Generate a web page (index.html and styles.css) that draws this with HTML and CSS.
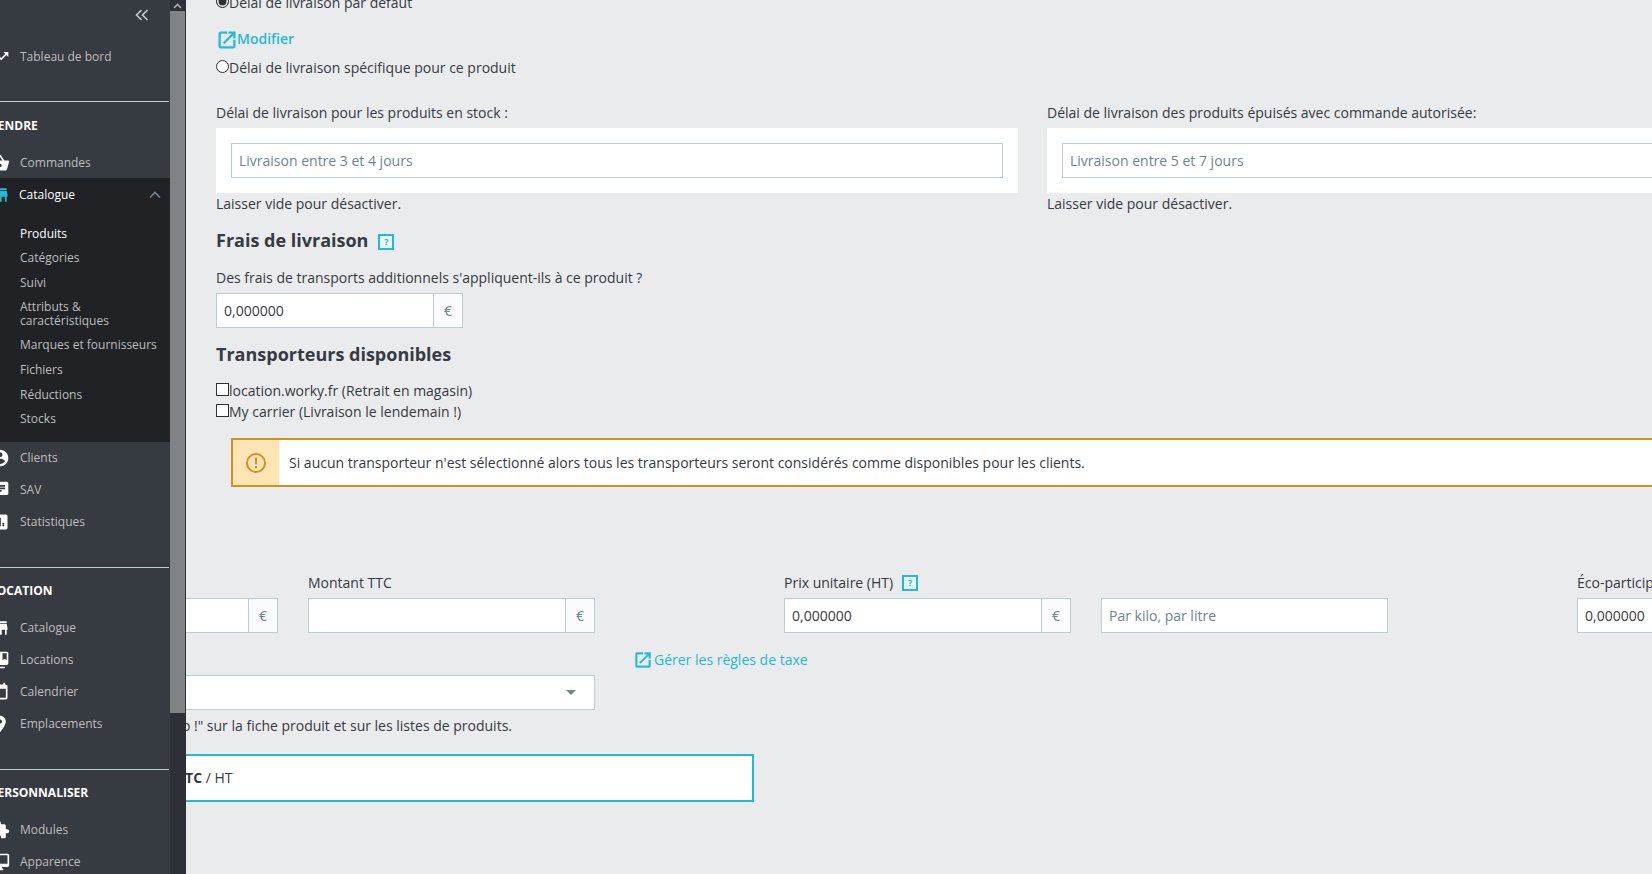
FILE: index.html
```html
<!DOCTYPE html>
<html lang="fr">
<head>
<meta charset="utf-8">
<title>Produit</title>
<link rel="stylesheet" href="styles.css">
</head>
<body>
<div class="app">
  <nav class="sidebar">
    <div class="collapse"><svg width="14" height="12" viewBox="0 0 14 12"><path d="M6.5 1 1.5 6l5 5M12.5 1l-5 5 5 5" class="collapse-arrow"/></svg></div>
    <a class="item"><svg class="ico" viewBox="0 0 24 24"><path d="M16 6l2.29 2.29-4.88 4.88-4-4L2 16.59 3.41 18l6-6 4 4 6.3-6.29L22 12V6z"/></svg>Tableau de bord</a>
    <section class="group first">
      <div class="head">Vendre</div>
      <a class="item"><svg class="ico" viewBox="0 0 24 24"><path d="M17.21 9l-4.38-6.56c-.19-.28-.51-.42-.83-.42-.32 0-.64.14-.83.43L6.79 9H2c-.55 0-1 .45-1 1 0 .09.01.18.04.27l2.54 9.27c.23.84 1 1.46 1.92 1.46h13c.92 0 1.69-.62 1.93-1.46l2.54-9.27L23 10c0-.55-.45-1-1-1h-4.79zM9 9l3-4.4L15 9H9zm3 8c-1.1 0-2-.9-2-2s.9-2 2-2 2 .9 2 2-.9 2-2 2z"/></svg>Commandes</a>
      <div class="open">
        <a class="item active"><svg class="ico" viewBox="0 0 24 24"><path d="M20 4H4v2h16V4zm1 10v-2l-1-5H4l-1 5v2h1v6h10v-6h4v6h2v-6h1zm-9 4H6v-4h6v4z"/></svg>Catalogue<svg class="chev" width="12" height="8" viewBox="0 0 12 8"><path d="M1 6.5 6 1.5l5 5"/></svg></a>
        <ul class="sub">
          <li class="current">Produits</li>
          <li>Catégories</li>
          <li>Suivi</li>
          <li class="wrap">Attributs &amp; caractéristiques</li>
          <li>Marques et fournisseurs</li>
          <li>Fichiers</li>
          <li>Réductions</li>
          <li>Stocks</li>
        </ul>
      </div>
      <a class="item"><svg class="ico" viewBox="0 0 24 24"><path d="M12 2C6.48 2 2 6.48 2 12s4.48 10 10 10 10-4.48 10-10S17.52 2 12 2zm0 3c1.66 0 3 1.34 3 3s-1.34 3-3 3-3-1.34-3-3 1.34-3 3-3zm0 14.2c-2.5 0-4.71-1.28-6-3.22.03-1.99 4-3.08 6-3.08 1.99 0 5.97 1.09 6 3.08-1.29 1.94-3.5 3.22-6 3.22z"/></svg>Clients</a>
      <a class="item"><svg class="ico" viewBox="0 0 24 24"><path d="M20 2H4c-1.1 0-1.99.9-1.99 2L2 22l4-4h14c1.1 0 2-.9 2-2V4c0-1.1-.9-2-2-2zM6 9h12v2H6V9zm8 5H6v-2h8v2zm4-6H6V6h12v2z"/></svg>SAV</a>
      <a class="item"><svg class="ico" viewBox="0 0 24 24"><path d="M19 3H5c-1.1 0-2 .9-2 2v14c0 1.1.9 2 2 2h14c1.1 0 2-.9 2-2V5c0-1.1-.9-2-2-2zM9 17H7v-7h2v7zm4 0h-2V7h2v10zm4 0h-2v-4h2v4z"/></svg>Statistiques</a>
    </section>
    <section class="group">
      <div class="head">Location</div>
      <a class="item"><svg class="ico" viewBox="0 0 24 24"><path d="M20 4H4v2h16V4zm1 10v-2l-1-5H4l-1 5v2h1v6h10v-6h4v6h2v-6h1zm-9 4H6v-4h6v4z"/></svg>Catalogue</a>
      <a class="item"><svg class="ico" viewBox="0 0 24 24"><path d="M4 6H2v14c0 1.1.9 2 2 2h14v-2H4V6zm16-4H8c-1.1 0-2 .9-2 2v12c0 1.1.9 2 2 2h12c1.1 0 2-.9 2-2V4c0-1.1-.9-2-2-2zm0 10l-2.5-1.5L15 12V4h5v8z"/></svg>Locations</a>
      <a class="item"><svg class="ico" viewBox="0 0 24 24"><path d="M19 3h-1V1h-2v2H8V1H6v2H5c-1.11 0-1.99.9-1.99 2L3 19c0 1.1.89 2 2 2h14c1.1 0 2-.9 2-2V5c0-1.1-.9-2-2-2zm0 16H5V8h14v11z"/></svg>Calendrier</a>
      <a class="item"><svg class="ico" viewBox="0 0 24 24"><path d="M12 2C8.13 2 5 5.13 5 9c0 5.25 7 13 7 13s7-7.75 7-13c0-3.87-3.13-7-7-7zm0 9.5c-1.38 0-2.5-1.12-2.5-2.5s1.12-2.5 2.5-2.5 2.5 1.12 2.5 2.5-1.12 2.5-2.5 2.5z"/></svg>Emplacements</a>
    </section>
    <section class="group">
      <div class="head">Personnaliser</div>
      <a class="item"><svg class="ico" viewBox="0 0 24 24"><path d="M20.5 11H19V7c0-1.1-.9-2-2-2h-4V3.5C13 2.12 11.88 1 10.5 1S8 2.12 8 3.5V5H4c-1.1 0-1.99.9-1.99 2v3.8H3.5c1.49 0 2.7 1.21 2.7 2.7s-1.21 2.7-2.7 2.7H2V20c0 1.1.9 2 2 2h3.8v-1.5c0-1.49 1.21-2.7 2.7-2.7 1.49 0 2.7 1.21 2.7 2.7V22H17c1.1 0 2-.9 2-2v-4h1.5c1.38 0 2.5-1.12 2.5-2.5S21.88 11 20.5 11z"/></svg>Modules</a>
      <a class="item"><svg class="ico" viewBox="0 0 24 24"><path d="M21 2H3c-1.1 0-2 .9-2 2v12c0 1.1.9 2 2 2h7l-2 3v1h8v-1l-2-3h7c1.1 0 2-.9 2-2V4c0-1.1-.9-2-2-2zm0 12H3V4h18v10z"/></svg>Apparence</a>
    </section>
  </nav>
  <div class="scrollbar">
    <div class="sb-up"><svg width="9" height="6" viewBox="0 0 9 6"><path d="M1 5 4.5 1.5 8 5"/></svg></div>
    <div class="sb-thumb"></div>
  </div>
  <main class="main">
    <label class="choice first-choice"><input class="radio" type="radio" name="delay" checked>Délai de livraison par défaut</label>
    <a class="link modify"><svg class="ext" viewBox="0 0 24 24"><path d="M19 19H5V5h7V3H5a2 2 0 0 0-2 2v14a2 2 0 0 0 2 2h14a2 2 0 0 0 2-2v-7h-2v7zM14 3v2h3.59l-9.83 9.83 1.41 1.41L19 6.41V10h2V3h-7z"/></svg>Modifier</a>
    <label class="choice second-choice"><input class="radio" type="radio" name="delay">Délai de livraison spécifique pour ce produit</label>

    <div class="delays">
      <div class="delay-col">
        <div class="label">Délai de livraison pour les produits en stock :</div>
        <div class="white-box"><input class="field" placeholder="Livraison entre 3 et 4 jours"></div>
        <div class="hint">Laisser vide pour désactiver.</div>
      </div>
      <div class="delay-col">
        <div class="label">Délai de livraison des produits épuisés avec commande autorisée:</div>
        <div class="white-box"><input class="field" placeholder="Livraison entre 5 et 7 jours"></div>
        <div class="hint">Laisser vide pour désactiver.</div>
      </div>
    </div>

    <h2 class="title fees-title">Frais de livraison<span class="help"><span>?</span></span></h2>
    <div class="label fees-label">Des frais de transports additionnels s'appliquent-ils à ce produit ?</div>
    <div class="group-input fees-input"><input class="field" value="0,000000"><span class="append">€</span></div>

    <h2 class="title carriers-title">Transporteurs disponibles</h2>
    <div class="carriers">
      <label class="choice"><input class="check" type="checkbox">location.worky.fr (Retrait en magasin)</label>
      <label class="choice"><input class="check" type="checkbox">My carrier (Livraison le lendemain !)</label>
    </div>

    <div class="alert">
      <div class="alert-icon"><svg width="22" height="22" viewBox="0 0 22 22"><circle cx="11" cy="11" r="9" class="warn-ring"/><rect x="10" y="5.6" width="2" height="6.8" class="warn-dot"/><rect x="10" y="14" width="2" height="2.2" class="warn-dot"/></svg></div>
      <div class="alert-text">Si aucun transporteur n'est sélectionné alors tous les transporteurs seront considérés comme disponibles pour les clients.</div>
    </div>

    <div class="prices">
      <div class="price-col">
        <div class="label">Montant HT</div>
        <div class="group-input"><input class="field"><span class="append">€</span></div>
      </div>
      <div class="price-col">
        <div class="label">Montant TTC</div>
        <div class="group-input"><input class="field"><span class="append">€</span></div>
      </div>
      <div class="price-col push">
        <div class="label with-help">Prix unitaire (HT)<span class="help"><span>?</span></span></div>
        <div class="group-input"><input class="field" value="0,000000"><span class="append">€</span></div>
      </div>
      <div class="price-col">
        <div class="label">&nbsp;</div>
        <input class="field solo" placeholder="Par kilo, par litre">
      </div>
      <div class="price-col push">
        <div class="label">Éco-participation (TTC)</div>
        <input class="field solo" value="0,000000">
      </div>
    </div>

    <div class="tax-row">
      <div class="select-wrap">
        <div class="select"><svg class="caret" width="10" height="5" viewBox="0 0 10 5"><path d="M0 0h10L5 5z"/></svg></div>
      </div>
      <a class="link tax-link"><svg class="ext" viewBox="0 0 24 24"><path d="M19 19H5V5h7V3H5a2 2 0 0 0-2 2v14a2 2 0 0 0 2 2h14a2 2 0 0 0 2-2v-7h-2v7zM14 3v2h3.59l-9.83 9.83 1.41 1.41L19 6.41V10h2V3h-7z"/></svg>Gérer les règles de taxe</a>
    </div>
    <div class="promo"><span>Afficher le bandeau "En promo !" sur la fiche produit et sur les listes de produits.</span></div>
    <div class="final"><strong>TTC</strong> / HT</div>
  </main>
</div>
</body>
</html>
```
FILE: styles.css
```css
* { box-sizing: border-box; }
html, body { margin: 0; height: 100%; overflow: hidden; }
body { font-family: "Open Sans", "Liberation Sans", sans-serif; font-size: 14px; line-height: 21px; color: #363a41; background: #eaebed; }
.app { display: flex; height: 874px; overflow: hidden; }

/* sidebar */
.sidebar { flex: 0 0 170px; width: 170px; height: 874px; background: #363a41; overflow: hidden; font-size: 12px; color: #bebebe; }
.collapse { height: 41px; display: flex; justify-content: flex-end; padding: 9px 21px 0 0; }
.collapse svg { display: block; }
.collapse-arrow { fill: none; stroke: #c9ced3; stroke-width: 1.6; }
.item { display: flex; align-items: center; height: 32px; line-height: 16px; }
.ico { flex: none; width: 20px; height: 20px; margin: 0 10px 0 -10px; fill: #fff; }
.group { border-top: 1px solid #bbcdd2; margin: 0 1px 0 0; }
.group.first { margin-top: 28px; }
.group:not(.first) { margin-top: 29px; }
.head { margin: 13px 0 11px -10px; height: 20px; line-height: 20px; font-weight: 700; text-transform: uppercase; color: #fff; white-space: nowrap; }
.first > .head { margin-top: 14px; }
.open { background: #202226; margin: -1px -1px 0 0; padding-bottom: 10.4px; }
.item.active { color: #fff; height: 34px; }
.item.active .ico { fill: #25b9d7; margin-right: 9px; }
.chev { margin-left: auto; margin-right: 9px; }
.chev path { fill: none; stroke: #6c868e; stroke-width: 1.6; }
.sub { list-style: none; margin: 0; padding: 9.4px 10px 0 20px; }
.sub li { padding: 5.3px 0; line-height: 14px; }
.sub li.wrap { padding: 5px 0; }
.sub li.current { color: #fff; }

/* scrollbar */
.scrollbar { flex: 0 0 16px; height: 874px; background: #2d3036; border-right: 1px solid #2d3036; }
.sb-up { height: 11px; display: flex; justify-content: center; align-items: center; }
.sb-up svg { display: block; }
.sb-up path { fill: none; stroke: #a8abae; stroke-width: 1.6; }
.sb-thumb { height: 702px; background: #808285; }

/* main */
.main { flex: 1; min-width: 0; overflow: hidden; padding: 0 0 0 30px; margin-top: -8px; height: 882px; }
.choice { display: flex; align-items: flex-start; height: 21px; white-space: nowrap; }
.radio, .check { appearance: none; -webkit-appearance: none; flex: none; margin: 0; width: 13px; height: 13px; border: 1.5px solid #2f3136; background: #fff; }
.radio { border-radius: 50%; margin-top: 3px; }
.radio:checked { background: #2f3136; box-shadow: inset 0 0 0 1.5px #fff; }
.check { margin-top: 3px; }
.link { display: flex; align-items: center; color: #25b9d7; height: 21px; white-space: nowrap; }
.ext { flex: none; fill: #25b9d7; stroke: #25b9d7; stroke-width: .5; }
.modify { margin: 15px 0 0; font-weight: 600; }
.modify .ext { width: 22px; height: 22px; margin: 2px -1px 0 0; }
.second-choice { margin-top: 8px; }
.label { height: 21px; white-space: nowrap; }
.with-help { display: flex; align-items: center; }

.delays { display: flex; gap: 29px; margin-top: 24px; width: 1634px; }
.delay-col { flex: 0 0 802px; }
.white-box { background: #fff; padding: 15px; margin-top: 5px; }
.field { display: block; width: 100%; height: 35px; border: 1px solid #bbcdd2; background: #fff; padding: 0 7px; margin: 0; font: inherit; color: #363a41; outline: none; border-radius: 0; }
.field::placeholder { color: #6c868e; opacity: 1; }

.title { margin: 0; font-size: 18px; line-height: 24px; font-weight: 700; color: #363a41; display: flex; align-items: center; }
.fees-title { margin-top: 14px; }
.help { display: inline-flex; align-items: center; justify-content: center; width: 16px; height: 16px; margin-left: 9px; border: 2px solid #25b9d7; background: #e8f7fa; color: #25b9d7; font-size: 9px; line-height: 12px; font-weight: 700; flex: none; }
.fees-title .help { margin: 4px 0 0 10px; }
.fees-label { margin-top: 15px; }
.group-input { display: flex; height: 35px; margin-top: 5px; width: 287px; }
.group-input .field { flex: 1; min-width: 0; width: auto; }
.append { flex: none; width: 29px; border: 1px solid #bbcdd2; border-left: 0; background: #fafbfc; color: #6c868e; display: flex; align-items: center; justify-content: center; }
.fees-input { width: 247px; }
.carriers-title { margin-top: 14px; }
.carriers { margin-top: 14px; }

.alert { display: flex; margin: 16px 0 0 15px; width: 1500px; height: 49px; border: 2px solid #cd9321; background: #fff; }
.alert-icon { flex: none; width: 46px; background: #fde4b4; display: flex; align-items: center; justify-content: center; }
.alert-text { padding-left: 10px; line-height: 45px; white-space: nowrap; }
.warn-ring { fill: none; stroke: #cd9321; stroke-width: 2; }
.warn-dot { fill: #cd9321; }

.prices { display: flex; gap: 30px; margin: 85px 0 0 -225px; width: 1900px; }
.price-col { flex: 0 0 287px; }
.price-col.push { margin-left: 159px; }
.solo { margin-top: 5px; }

.tax-row { display: flex; margin: 16px 0 0 -225px; }
.select-wrap { flex: 0 0 604px; padding-top: 26px; }
.select { height: 35px; background: #fff; border: 1px solid #bbcdd2; display: flex; align-items: center; justify-content: flex-end; padding: 0 18px 0 0; }
.tax-link { margin-left: 38px; }
.tax-link .ext { width: 20px; height: 20px; margin: 1px 1px 0 0; }
.caret path { fill: #6c868e; }
.promo { display: flex; justify-content: flex-end; width: 521px; margin: 5px 0 0 -225px; white-space: nowrap; height: 21px; }
.final { margin: 18px 0 0 -225px; width: 763px; height: 48px; border: 2px solid #25b9d7; background: #fff; line-height: 44px; padding-left: 184px; white-space: nowrap; }
```
